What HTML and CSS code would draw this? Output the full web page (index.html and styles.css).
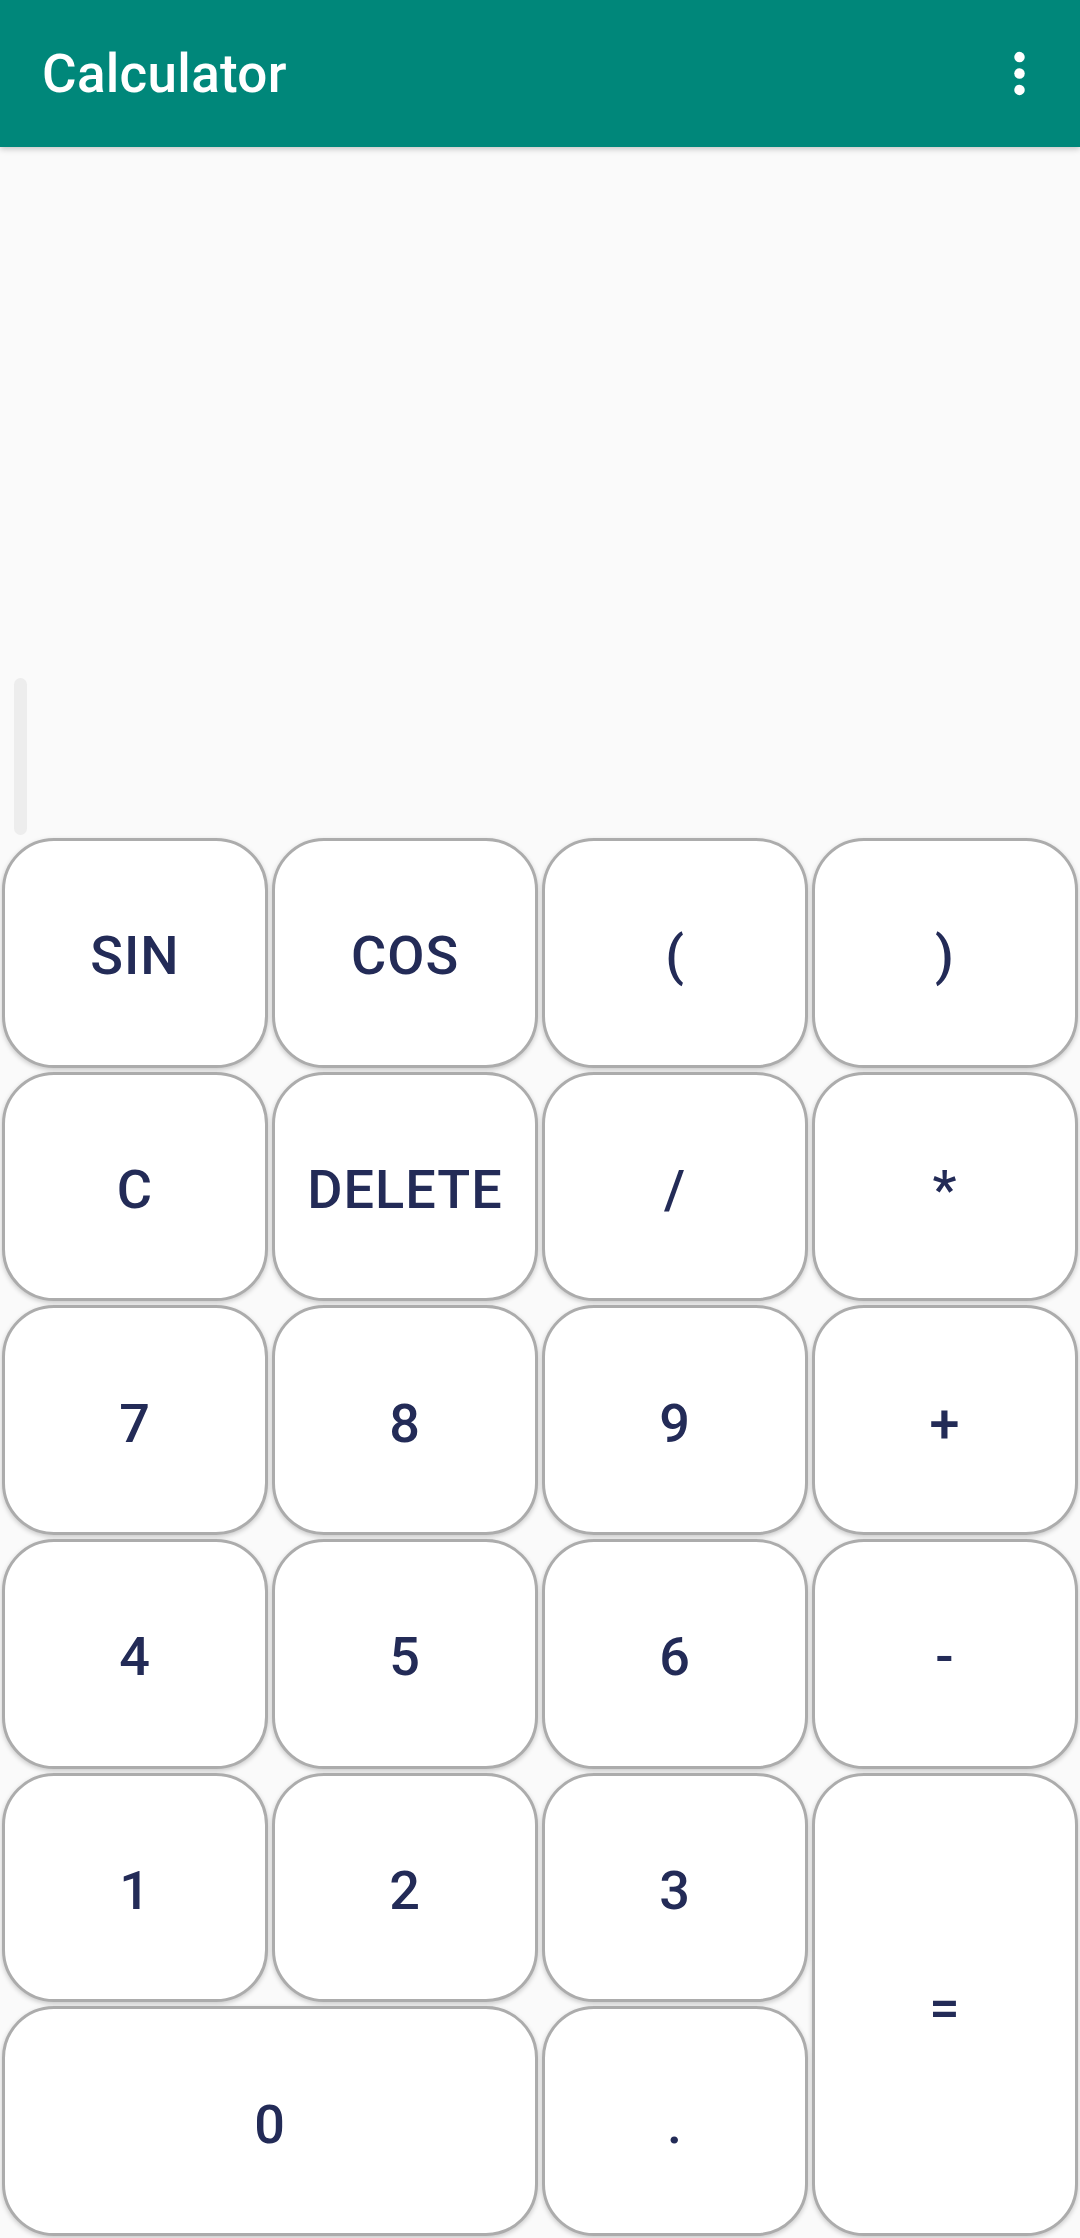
FILE: index.html
```html
<!DOCTYPE html>
<html>
<head>
<meta charset="utf-8">
<title>Calculator</title>
<link rel="stylesheet" href="styles.css">
</head>
<body>
<div class="app">
  <header class="appbar">
    <h1 class="title">Calculator</h1>
    <button class="overflow" aria-label="More options">
      <svg width="63" height="63" viewBox="0 0 24 24"><circle cx="12" cy="5.75" r="2" fill="#fff"/><circle cx="12" cy="12" r="2" fill="#fff"/><circle cx="12" cy="18.25" r="2" fill="#fff"/></svg>
    </button>
  </header>
  <main class="display">
    <div class="scrollbar"></div>
  </main>
  <section class="keypad">
    <button class="key">SIN</button>
    <button class="key">COS</button>
    <button class="key">(</button>
    <button class="key">)</button>
    <button class="key">C</button>
    <button class="key">DELETE</button>
    <button class="key">/</button>
    <button class="key">*</button>
    <button class="key">7</button>
    <button class="key">8</button>
    <button class="key">9</button>
    <button class="key">+</button>
    <button class="key">4</button>
    <button class="key">5</button>
    <button class="key">6</button>
    <button class="key">-</button>
    <button class="key">1</button>
    <button class="key">2</button>
    <button class="key">3</button>
    <button class="key key-equals">=</button>
    <button class="key key-zero">0</button>
    <button class="key">.</button>
  </section>
</div>
</body>
</html>
```
FILE: styles.css
```css
* { box-sizing: border-box; }
html, body { margin: 0; padding: 0; }
body {
  width: 1080px;
  height: 2238px;
  background: #fafafa;
  font-family: Roboto, "Liberation Sans", sans-serif;
  overflow: hidden;
}
.app {
  display: flex;
  flex-direction: column;
  height: 2238px;
}
.appbar {
  position: relative;
  z-index: 2;
  height: 147px;
  flex: 0 0 147px;
  background: #00877a;
  display: flex;
  align-items: center;
  justify-content: space-between;
  padding: 0 29px 0 42px;
  box-shadow: 0 2px 6px rgba(0,0,0,0.22);
}
.title {
  margin: 0;
  color: #fff;
  font-size: 53px;
  font-weight: 500;
  letter-spacing: 0.3px;
}
.overflow {
  border: 0;
  background: transparent;
  padding: 0;
  width: 63px;
  height: 63px;
  display: flex;
  align-items: center;
  justify-content: center;
}
.display {
  flex: 1 1 auto;
  display: flex;
  align-items: flex-end;
  padding: 0 0 1px 14px;
}
.scrollbar {
  width: 13px;
  height: 157px;
  border-radius: 7px;
  background: #ededed;
}
.keypad {
  flex: 0 0 1402px;
  height: 1402px;
  display: grid;
  grid-template-columns: repeat(4, 1fr);
  grid-template-rows: repeat(6, 1fr);
}
.key {
  margin: 2px;
  border: 3px solid #acacac;
  border-radius: 52px;
  background: #fff;
  color: #232b57;
  font-family: Roboto, "Liberation Sans", sans-serif;
  font-weight: 500;
  font-size: 54px;
  letter-spacing: 1px;
  padding: 6px 0 0 0;
  display: flex;
  align-items: center;
  justify-content: center;
  box-shadow: 0 2px 5px rgba(0,0,0,0.2);
}
.key-equals {
  grid-column: 4;
  grid-row: 5 / span 2;
}
.key-zero {
  grid-column: 1 / span 2;
  grid-row: 6;
}
```
